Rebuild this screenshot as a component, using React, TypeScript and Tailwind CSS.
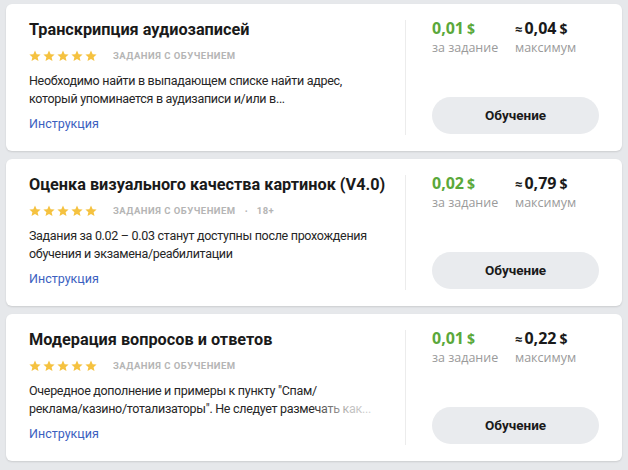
import React from "react";

type Task = {
  title: string;
  age?: string;
  lines: [string, string];
  price: string;
  max: string;
};

const tasks: Task[] = [
  {
    title: "Транскрипция аудиозаписей",
    lines: [
      "Необходимо найти в выпадающем списке найти адрес,",
      "который упоминается в аудизаписи и/или в...",
    ],
    price: "0,01",
    max: "0,04",
  },
  {
    title: "Оценка визуального качества картинок (V4.0)",
    age: "18+",
    lines: [
      "Задания за 0.02 – 0.03 станут доступны после прохождения",
      "обучения и экзамена/реабилитации",
    ],
    price: "0,02",
    max: "0,79",
  },
  {
    title: "Модерация вопросов и ответов",
    lines: [
      "Очередное дополнение и примеры к пункту \"Спам/",
      "реклама/казино/тотализаторы\". Не следует размечать как...",
    ],
    price: "0,01",
    max: "0,22",
  },
];

function Star() {
  return (
    <svg width="12" height="12" viewBox="0 0 24 24" className="text-[#f5c240]">
      <path
        fill="currentColor"
        d="M12 1l3.3 7.3 7.9.8-6 5.3 1.8 7.8L12 18.1l-7 4.1 1.8-7.8-6-5.3 7.9-.8z"
      />
    </svg>
  );
}

function TaskCard({ t }: { t: Task }) {
  return (
    <div className="flex h-[147px] rounded-[6px] bg-white px-[23px] shadow-[0_1px_2px_rgba(0,0,0,0.12)]">
      <div className="flex min-w-0 flex-1 flex-col pt-[14px]">
        <div className="text-[16.25px] font-bold leading-[24px] text-[#1a1a1a]">{t.title}</div>
        <div className="mt-[6px] flex h-[16px] items-center">
          <div className="flex gap-[2px]">
            <Star />
            <Star />
            <Star />
            <Star />
            <Star />
          </div>
          <span className="ml-[16px] text-[9.5px] font-bold tracking-[0.5px] text-[#b5b5b5]">
            ЗАДАНИЯ С ОБУЧЕНИЕМ
          </span>
          {t.age && (
            <>
              <span className="mx-[9px] text-[10px] font-bold text-[#b5b5b5]">·</span>
              <span className="text-[9.5px] font-bold tracking-[0.5px] text-[#b5b5b5]">{t.age}</span>
            </>
          )}
        </div>
        <div className="relative mt-[8px] text-[12.5px] leading-[18px] tracking-[-0.3px] text-[#262626]">
          <div className="whitespace-nowrap">{t.lines[0]}</div>
          <div className="whitespace-nowrap">{t.lines[1]}</div>
          <div className="absolute bottom-0 left-[282px] h-[18px] w-[75px] bg-gradient-to-r from-white/0 via-white/70 to-white/85" />
        </div>
        <a className="mt-[7px] text-[12.5px] leading-[18px] text-[#3b5fbf]">Инструкция</a>
      </div>
      <div className="my-[16px] w-px bg-[#ececec]" />
      <div className="flex w-[193px] flex-col pl-[26px] pt-[14px] pb-[17px]">
        <div className="flex" style={{ fontFamily: '"Open Sans", sans-serif' }}>
          <div className="w-[83px]">
            <div className="text-[16px] font-bold leading-[20px] text-[#5aa83a]">
              {t.price}
              <span className="ml-[3px] text-[14px]">$</span>
            </div>
            <div className="text-[12.5px] leading-[18px] text-[#9a9a9a]">за задание</div>
          </div>
          <div>
            <div className="text-[16px] font-bold leading-[20px] text-[#1a1a1a]">
              <span className="mr-[2px] text-[13px]">≈</span>
              {t.max}
              <span className="ml-[3px] text-[14px]">$</span>
            </div>
            <div className="text-[12.5px] leading-[18px] text-[#9a9a9a]">максимум</div>
          </div>
        </div>
        <button className="mt-auto h-[37px] w-[167px] rounded-full bg-[#e9ebee] text-[13.5px] font-bold text-[#1a1a1a]">
          Обучение
        </button>
      </div>
    </div>
  );
}

export default function App() {
  return (
    <div
      className="h-[470px] w-[628px] bg-[#e6e8eb] px-[6px] pt-[4px]"
      style={{ fontFamily: 'Roboto, "Noto Sans", sans-serif' }}
    >
      <div className="flex flex-col gap-[8px]">
        {tasks.map((t) => (
          <TaskCard key={t.title} t={t} />
        ))}
      </div>
    </div>
  );
}
